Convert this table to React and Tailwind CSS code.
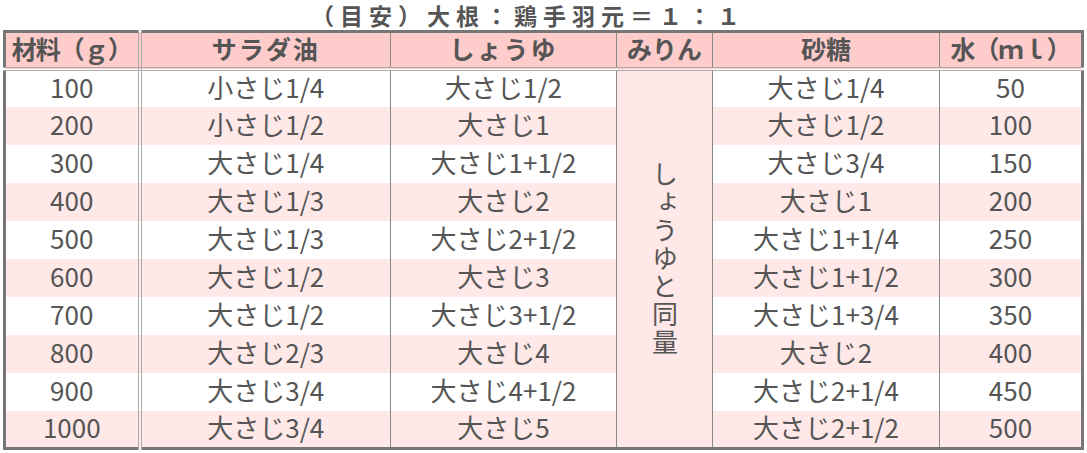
const ROWS = [
  ['100', '小さじ1/4', '大さじ1/2', '大さじ1/4', '50'],
  ['200', '小さじ1/2', '大さじ1', '大さじ1/2', '100'],
  ['300', '大さじ1/4', '大さじ1+1/2', '大さじ3/4', '150'],
  ['400', '大さじ1/3', '大さじ2', '大さじ1', '200'],
  ['500', '大さじ1/3', '大さじ2+1/2', '大さじ1+1/4', '250'],
  ['600', '大さじ1/2', '大さじ3', '大さじ1+1/2', '300'],
  ['700', '大さじ1/2', '大さじ3+1/2', '大さじ1+3/4', '350'],
  ['800', '大さじ2/3', '大さじ4', '大さじ2', '400'],
  ['900', '大さじ3/4', '大さじ4+1/2', '大さじ2+1/4', '450'],
  ['1000', '大さじ3/4', '大さじ5', '大さじ2+1/2', '500'],
];

export default function App() {
  return (
    <div className="bg-white w-[1087px] h-[453px] text-[#555] font-['Noto_Sans_CJK_JP',sans-serif]">
      <h2 className="h-[30px] pr-[30px] text-center text-[23px] font-bold leading-[30px] tracking-[6px]">（目安）大根：鶏手羽元＝１：１</h2>
      <table className="ml-[3px] w-[1081px] table-fixed border-collapse border-[3px] border-[#777] text-center">
        <colgroup>
          <col className="w-[135px]" />
          <col className="w-[251px]" />
          <col className="w-[226px]" />
          <col className="w-[96px]" />
          <col className="w-[227px]" />
          <col />
        </colgroup>
        <thead>
          <tr className="h-[37px] bg-[#ffcccc] text-[25px] font-bold leading-none">
            <th className="border-b-4 border-r-4 border-double border-[#aaa] p-0 pb-[2px] tracking-[-1px]">材料（ｇ）</th>
            <th className="border-b-4 border-r border-double border-b-[#aaa] border-r-[#888] p-0 pb-[2px] tracking-[2px]">サラダ油</th>
            <th className="border-b-4 border-r border-double border-b-[#aaa] border-r-[#888] p-0 pb-[2px] tracking-[2px]">しょうゆ</th>
            <th className="border-b-4 border-r border-double border-b-[#aaa] border-r-[#888] p-0 pb-[2px]">みりん</th>
            <th className="border-b-4 border-r border-double border-b-[#aaa] border-r-[#888] p-0 pb-[2px]">砂糖</th>
            <th className="border-b-4 border-double border-b-[#aaa] p-0 pb-[2px] tracking-[-1px]">水（ｍｌ）</th>
          </tr>
        </thead>
        <tbody className="text-[26px] leading-none">
          {ROWS.map((r, i) => (
            <tr key={r[0]} className={i % 2 ? 'h-[38px] bg-[#ffe8e8]' : 'h-[38px] bg-white'}>
              <td className="border-r-4 border-double border-[#aaa] p-0 pb-[3px]">{r[0]}</td>
              <td className="border-r border-[#888] p-0 pb-[3px]">{r[1]}</td>
              <td className="border-r border-[#888] p-0 pb-[3px]">{r[2]}</td>
              {i === 0 && (
                <td rowSpan={10} className="border-r border-[#888] bg-[#ffe8e8] p-0 align-middle">
                  <div className="flex justify-center">
                    <div className="[writing-mode:vertical-rl] text-[26px] leading-[28px] tracking-[2px]">しょうゆと同量</div>
                  </div>
                </td>
              )}
              <td className="border-r border-[#888] p-0 pb-[3px]">{r[3]}</td>
              <td className="p-0 pb-[3px]">{r[4]}</td>
            </tr>
          ))}
        </tbody>
      </table>
    </div>
  );
}
